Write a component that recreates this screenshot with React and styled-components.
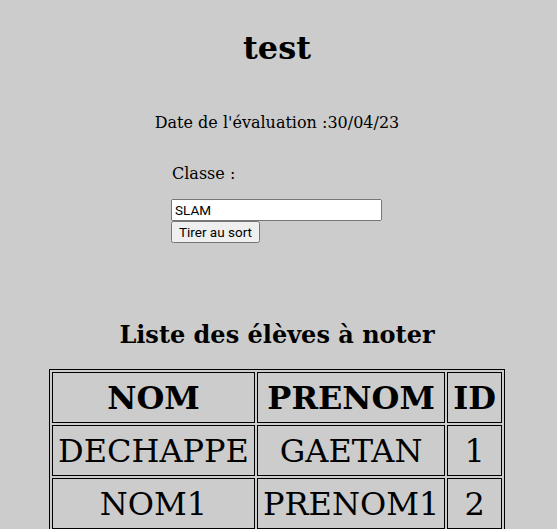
import React from 'react';
import styled, { createGlobalStyle } from 'styled-components';

const GlobalStyle = createGlobalStyle`
  html, body {
    background-color: #cccccc;
  }
  body {
    margin: 8px 11px 8px 8px;
    font-family: "DejaVu Serif", serif;
    color: #000;
  }
`;

const Title = styled.h1`
  text-align: center;
  font-size: 32px;
  margin: 21.44px 0;
`;

const DateLine = styled.p`
  text-align: center;
  font-size: 16px;
  margin: 46px 0 0;
`;

const ClassForm = styled.form`
  width: 212px;
  margin: 0 auto;
  padding-top: 16px;
`;

const Label = styled.p`
  margin: 16px 0 16px 1px;
  font-size: 16px;
`;

const ClassInput = styled.input`
  display: block;
  width: 211px;
  height: 22px;
  box-sizing: border-box;
  margin: 0;
  font-family: Roboto, "Noto Sans", sans-serif;
  font-size: 13.5px;
`;

const SortButton = styled.button`
  height: 22px;
  margin: 0;
  padding: 1px 6px;
  font-family: Roboto, "Noto Sans", sans-serif;
  font-size: 13.5px;
`;

const SubTitle = styled.h2`
  text-align: center;
  font-size: 24px;
  margin: 77px 0 19.92px;
`;

const Table = styled.table`
  margin: 0 auto;
  border: 1px solid #000;
  border-spacing: 2px;
  font-size: 32px;
`;

const Cell = styled.td`
  border: 1px solid #000;
  padding: 5.5px 5px;
  text-align: center;
`;

const HeadCell = styled(Cell).attrs({ as: 'th' })`
  font-weight: bold;
`;

const eleves = [
  { nom: 'DECHAPPE', prenom: 'GAETAN', id: 1 },
  { nom: 'NOM1', prenom: 'PRENOM1', id: 2 },
];

export default function App() {
  return (
    <>
      <GlobalStyle />
      <Title>test</Title>
      <DateLine>Date de l'évaluation :30/04/23</DateLine>
      <ClassForm onSubmit={(e) => e.preventDefault()}>
        <Label>Classe :</Label>
        <ClassInput type="text" defaultValue="SLAM" />
        <SortButton type="submit">Tirer au sort</SortButton>
      </ClassForm>
      <SubTitle>Liste des élèves à noter</SubTitle>
      <Table>
        <thead>
          <tr>
            <HeadCell>NOM</HeadCell>
            <HeadCell>PRENOM</HeadCell>
            <HeadCell>ID</HeadCell>
          </tr>
        </thead>
        <tbody>
          {eleves.map((e) => (
            <tr key={e.id}>
              <Cell>{e.nom}</Cell>
              <Cell>{e.prenom}</Cell>
              <Cell>{e.id}</Cell>
            </tr>
          ))}
        </tbody>
      </Table>
    </>
  );
}
